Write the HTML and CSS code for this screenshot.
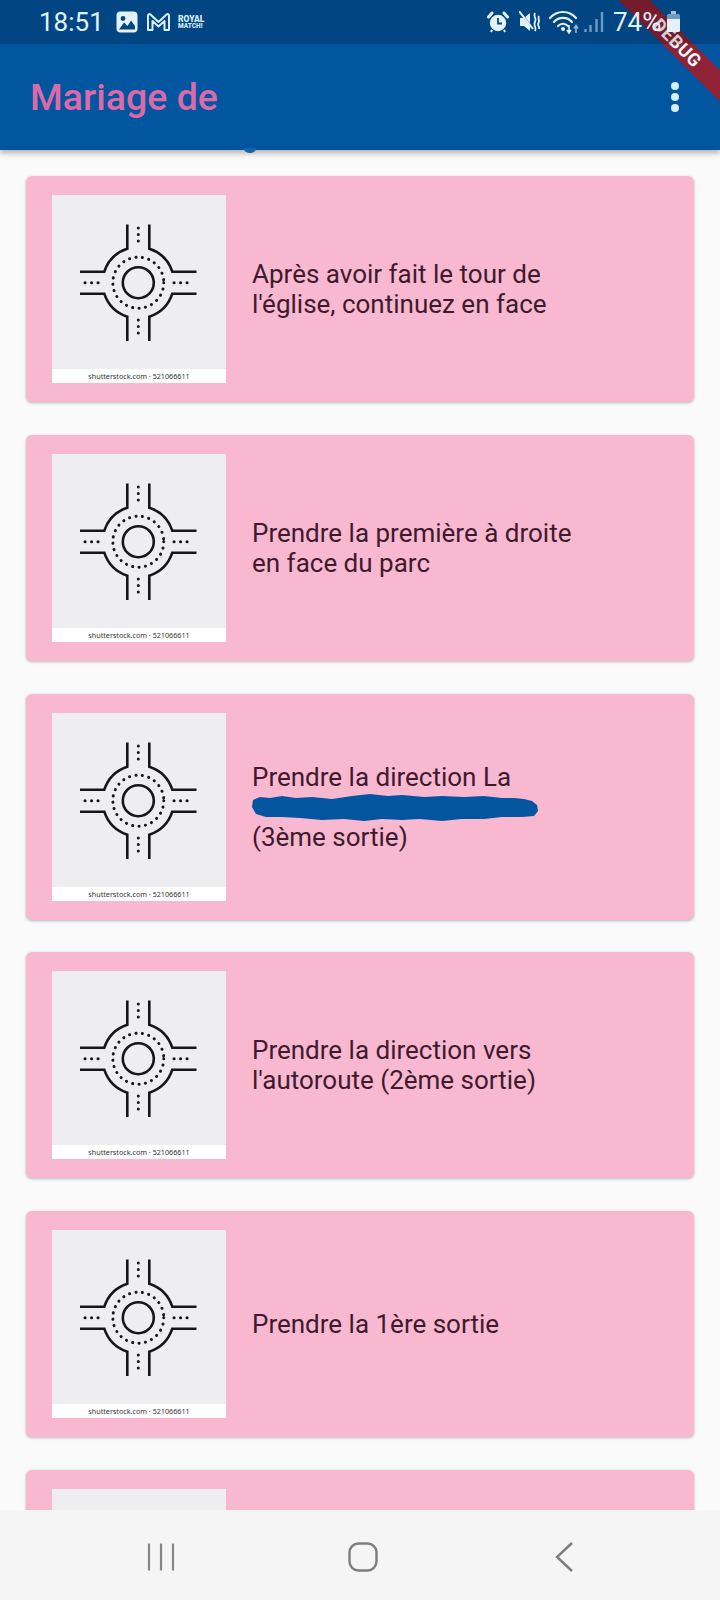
FILE: index.html
```html
<!DOCTYPE html>
<html lang="fr">
<head>
<meta charset="utf-8">
<title>Mariage de</title>
<link rel="stylesheet" href="styles.css">
</head>
<body>
<svg class="defs" width="0" height="0" aria-hidden="true">
  <symbol id="roundabout" viewBox="0 0 174 174">
    <g fill="none" stroke="#15151c" stroke-width="2.6">
      <circle cx="86.3" cy="87.7" r="15.5"/>
      <path d="M28 76.700H52.300A36 36 0 0 1 75.300 53.700V29.500M97.300 29.500V53.700A36 36 0 0 1 120.300 76.700H144.500M144.500 98.700H120.300A36 36 0 0 1 97.300 121.700V146M75.300 146V121.700A36 36 0 0 1 52.300 98.700H28"/>
      <g stroke-linecap="round" stroke-dasharray="0.1 6.4" stroke-width="3">
        <circle cx="86.3" cy="87.7" r="25.5"/>
        <path d="M33 87.700H50M122 87.700H140M86.300 33V50M86.300 125V143"/>
      </g>
    </g>
  </symbol>
</svg>

<div class="screen">
  <div class="top">
    <header class="status">
      <div class="status-left">
        <span class="time">18:51</span>
        <svg class="ic-gallery" width="22" height="22" viewBox="0 0 22 22"><rect x="0.5" y="0.5" width="21" height="21" rx="4" fill="#e4f3fb"/><circle cx="7" cy="7.500" r="2.400" fill="#04467f"/><path d="M3 18.500 8 11.500 11.500 15 15 9.500 19 15V18.500Z" fill="#04467f"/></svg>
        <svg class="ic-m" width="25" height="20" viewBox="0 0 25 20"><path d="M2 18V3.500C2 2 3.500 1.500 4.500 2.500L12.500 10 20.500 2.500C21.500 1.500 23 2 23 3.500V18H18.500V9L12.500 14.500 6.500 9V18Z" fill="none" stroke="#d9f0fb" stroke-width="2" stroke-linejoin="round"/></svg>
        <span class="royal"><span>ROYAL</span><span class="royal-sm">MATCH!</span></span>
      </div>
      <div class="status-right">
        <svg width="22" height="22" viewBox="0 0 22 22"><path d="M1.500 6 5 2M20.500 6 17 2" stroke="#e4f3fb" stroke-width="3" stroke-linecap="round"/><circle cx="11" cy="12" r="8.200" fill="#e4f3fb"/><path d="M11 7V12.500H15" fill="none" stroke="#04467f" stroke-width="1.800"/><path d="M5 19 4 21M17 19 18 21" stroke="#e4f3fb" stroke-width="2"/></svg>
        <svg class="ic-mute" width="21" height="22" viewBox="0 0 21 22"><path d="M1 7H5L11 2V20L5 15H1Z" fill="#e4f3fb"/><path d="M1 1 15 19" stroke="#04467f" stroke-width="2"/><path d="M0 0 14 18" stroke="#e4f3fb" stroke-width="2"/><path d="M16 2C14 6 18 7 16 11S18 16 16 20M20 5C18.500 8 21 9 19.500 12S21 15 20 18" fill="none" stroke="#e4f3fb" stroke-width="1.800"/></svg>
        <svg class="ic-wifi" width="36" height="24" viewBox="0 0 36 24"><g fill="none" stroke="#e4f3fb" stroke-width="2.200" stroke-linecap="round"><path d="M1 8C8 0 20 0 27 8"/><path d="M5 12C10 6.500 18 6.500 23 12"/><path d="M9 16C12 13 16 13 19 16"/></g><circle cx="14" cy="19" r="2" fill="#e4f3fb"/><path d="M20 15V22M18 20 20 23 22 20" fill="none" stroke="#e4f3fb" stroke-width="1.600"/><path d="M27 23V16M25 18.500 27 15.500 29 18.500" fill="none" stroke="#8fb4cf" stroke-width="1.600"/></svg>
        <svg class="ic-signal" width="20" height="22" viewBox="0 0 20 22"><path d="M1.500 18V21M6.500 14V21M12.500 8V21M18 1V21" stroke="#6f9cbf" stroke-width="2.400"/></svg>
        <span class="pct">74%</span>
        <svg class="ic-batt" width="15" height="22" viewBox="0 0 15 22"><path d="M5 0H10V3H5Z" fill="#a9c2d6"/><path d="M1 4.500Q1 3 2.500 3H12.500Q14 3 14 4.500V8H1Z" fill="#6f9cbf"/><path d="M1 8H14V19.500Q14 21 12.500 21H2.500Q1 21 1 19.500Z" fill="#e4f3fb"/></svg>
      </div>
    </header>

    <div class="appbar">
      <h1 class="title">Mariage de</h1>
      <div class="menu"><i></i><i></i><i></i></div>
      <span class="smudge"></span>
    </div>
  </div>

  <main class="list">
    <article class="card">
      <div class="thumb"><svg class="junction"><use href="#roundabout"/></svg><div class="credit">shutterstock.com · 521066611</div></div>
      <p class="label">Après avoir fait le tour de l'église, continuez en face</p>
    </article>
    <article class="card">
      <div class="thumb"><svg class="junction"><use href="#roundabout"/></svg><div class="credit">shutterstock.com · 521066611</div></div>
      <p class="label">Prendre la première à droite en face du parc</p>
    </article>
    <article class="card">
      <div class="thumb"><svg class="junction"><use href="#roundabout"/></svg><div class="credit">shutterstock.com · 521066611</div></div>
      <div class="label">Prendre la direction La
        <svg class="scribble" viewBox="0 0 286 30" preserveAspectRatio="none"><path d="M1 8 8 5 18 6 30 4 44 6 60 5 80 7 100 4 118 2 136 4 150 3 172 5 190 4 212 5 232 4 250 6 262 6 272 7 280 9 285 13 286 19 282 24 270 25 250 25 232 27 210 27 190 29 168 27 150 28 130 27 112 29 92 27 70 28 48 26 30 25 14 25 4 22 0 15Z" fill="#04559f"/></svg>
        (3ème sortie)</div>
    </article>
    <article class="card">
      <div class="thumb"><svg class="junction"><use href="#roundabout"/></svg><div class="credit">shutterstock.com · 521066611</div></div>
      <p class="label">Prendre la direction vers l'autoroute (2ème sortie)</p>
    </article>
    <article class="card">
      <div class="thumb"><svg class="junction"><use href="#roundabout"/></svg><div class="credit">shutterstock.com · 521066611</div></div>
      <p class="label">Prendre la 1ère sortie</p>
    </article>
    <article class="card">
      <div class="thumb"><svg class="junction"><use href="#roundabout"/></svg></div>
    </article>
  </main>

  <nav class="nav">
    <svg width="30" height="30" viewBox="0 0 30 30"><path d="M3 1.500V28.500M15 1.500V28.500M27 1.500V28.500" stroke="#858585" stroke-width="2.200"/></svg>
    <svg width="30" height="30" viewBox="0 0 30 30"><rect x="1.500" y="1.500" width="27" height="27" rx="9" fill="none" stroke="#7d7d7d" stroke-width="2.400"/></svg>
    <svg width="30" height="30" viewBox="0 0 30 30"><path d="M22 1 7 15 22 29" fill="none" stroke="#7d7d7d" stroke-width="2.400"/></svg>
  </nav>

  <div class="banner">DEBUG</div>
</div>
</body>
</html>
```
FILE: styles.css
```css
* { box-sizing: border-box; }
html, body { margin: 0; padding: 0; }
body { width: 720px; height: 1600px; overflow: hidden; font-family: Roboto, "Liberation Sans", sans-serif; background: #fafafa; }
.defs { position: absolute; }
.screen { position: relative; width: 720px; height: 1600px; display: flex; flex-direction: column; overflow: hidden; }

.top { flex: 0 0 150px; display: flex; flex-direction: column; background: #02559f; box-shadow: 0 3px 6px rgba(0,0,0,.3); position: relative; }
.status { position: relative; z-index: 5; flex: 0 0 44px; display: flex; justify-content: space-between; align-items: center; padding: 0 39px 0 39px; background: rgba(0,0,0,.18); color: #e4f3fb; }
.status-left, .status-right { display: flex; align-items: center; }
.time { font-size: 26px; width: 77px; }
.ic-m { margin-left: 8px; }
.royal { margin-left: 7px; display: flex; flex-direction: column; font-size: 8.5px; font-weight: 900; line-height: 8px; color: #d9eef9; }
.royal-sm { font-size: 6.5px; line-height: 6px; }
.ic-mute { margin-left: 10px; }
.ic-wifi { margin-left: 9px; }
.ic-signal { margin-left: -1px; }
.pct { font-size: 26px; margin-left: 9px; width: 53px; }

.appbar { position: relative; flex: 1 1 auto; display: flex; align-items: center; justify-content: space-between; padding: 0 41px 0 30px; }
.title { margin: 0; font-size: 37.5px; font-weight: 500; color: #dd6aa8; }
.menu { display: flex; flex-direction: column; gap: 3px; }
.menu i { display: block; width: 8px; height: 8px; border-radius: 50%; background: #d7effb; }
.smudge { position: absolute; left: 244px; top: 104px; width: 12px; height: 5px; border-radius: 0 0 6px 6px; background: #1a62a6; }

.list { flex: 1 1 auto; min-height: 0; overflow: hidden; padding: 26px 26px 0; display: flex; flex-direction: column; gap: 32.8px; }
.card { flex: 0 0 226px; display: flex; align-items: center; gap: 26px; padding: 0 26px; border-radius: 6px; background: #f8b9d0; box-shadow: 0 1px 3px rgba(0,0,0,.28); }
.thumb { flex: 0 0 174px; height: 188px; display: flex; flex-direction: column; background: #fff; }
.junction { flex: 0 0 174px; width: 174px; height: 174px; background: #eeeef0; }
.credit { flex: 0 0 14px; font: 7.2px/14px "Noto Sans", sans-serif; text-align: center; color: #333; white-space: nowrap; }
.label { margin: 0; width: 340px; font-size: 26px; line-height: 30px; color: #3f1a2e; }
.scribble { display: block; width: 286px; height: 30px; }

.nav { flex: 0 0 90px; display: grid; grid-template-columns: repeat(3, 202px); justify-items: center; align-items: center; padding: 3px 0 0 60px; background: #f5f5f5; z-index: 3; }

.banner { position: absolute; left: 577px; top: 32px; width: 200px; height: 22px; transform: rotate(45deg); background: #8f2236; color: #fff; font-size: 18px; font-weight: 700; line-height: 22px; text-align: center; letter-spacing: .5px; z-index: 4; }
```
